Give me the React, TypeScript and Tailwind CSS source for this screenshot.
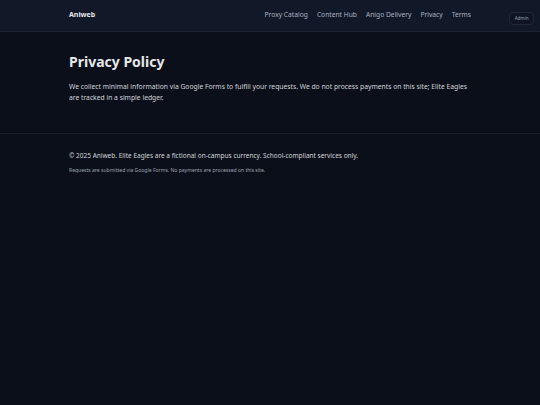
export default function App() {
  const links = ['Proxy Catalog', 'Content Hub', 'Anigo Delivery', 'Privacy', 'Terms']

  return (
    <div className="min-h-screen bg-[#0b0f19] text-[#e5e7eb] font-['Noto_Sans',sans-serif]">
      <header className="bg-[#111827] border-b border-[#1c2333]">
        <div className="max-w-[402px] mx-auto h-[31px] flex items-center justify-between">
          <span className="text-[7px] font-bold text-[#e5e7eb]">Aniweb</span>
          <nav className="flex items-center gap-[9px] text-[6.7px] text-[#aab2c0]">
            {links.map((l) => (
              <a key={l} href="#" className="hover:text-white">
                {l}
              </a>
            ))}
          </nav>
        </div>
      </header>

      {/* admin badge sits over the page */}
      <button className="fixed top-[12px] right-[6px] px-[4.5px] py-[3px] rounded-[4px] border border-[#1f2937] bg-[#0f1523] text-[4.5px] leading-none text-[#9ca3af]">
        Admin
      </button>

      <main className="max-w-[402px] mx-auto pt-[20px] pb-[30px]">
        <h1 className="text-[14px] leading-[20px] font-bold text-[#e5e7eb]">Privacy Policy</h1>
        <p className="mt-[9px] text-[6.75px] leading-[11px] text-[#d1d5db]">
          We collect minimal information via Google Forms to fulfill your requests. We do not process payments on this
          site; Elite Eagles are tracked in a simple ledger.
        </p>
      </main>

      <footer className="border-t border-[#161c28]">
        <div className="max-w-[402px] mx-auto pt-[16px] pb-[20px]">
          <p className="text-[6.5px] leading-[11px] text-[#d1d5db]">
            © 2025 Aniweb. Elite Eagles are a fictional on-campus currency. School-compliant services only.
          </p>
          <p className="mt-[5px] text-[5.05px] leading-[8px] text-[#9ca3af]">
            Requests are submitted via Google Forms. No payments are processed on this site.
          </p>
        </div>
      </footer>
    </div>
  )
}
